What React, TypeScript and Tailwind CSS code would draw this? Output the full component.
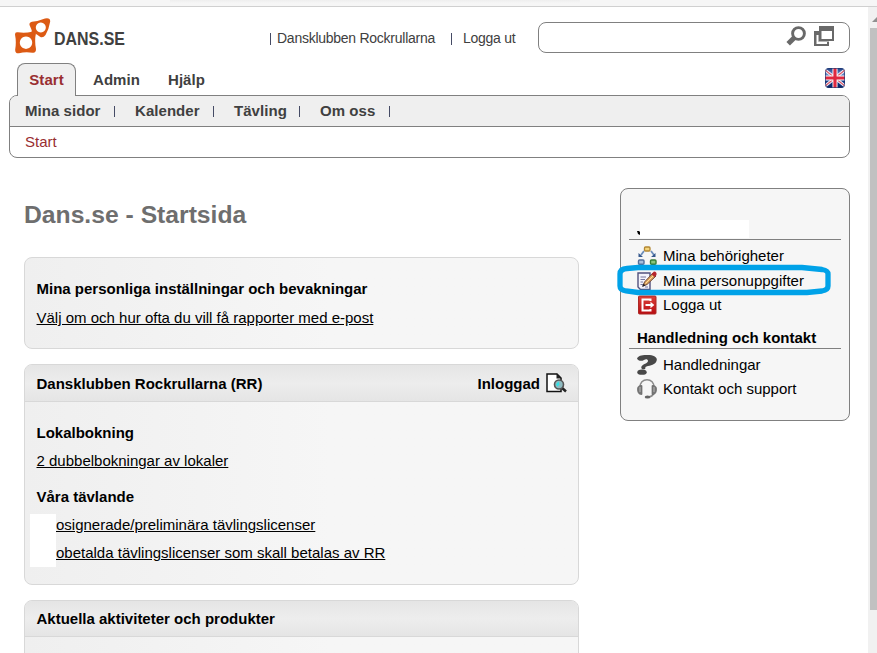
import type { ReactNode } from "react";

function Logo() {
  return (
    <svg width="37" height="37" viewBox="0 0 37 37" className="ml-[14px] mt-[10px] shrink-0">
      <g fill="#dc5a14" fillRule="evenodd">
        <path d="M1 17.500Q1 14.500 4 15.300Q11 16.300 18 14.800Q21.500 14 21.700 17Q20.500 25 22 32Q22 36.300 18.500 35.700Q11 34.700 5 36.200Q1 36.700 1.200 32.500Q2.500 25 1 17.500ZM12 19.500a6.200 6.200 0 1 0 .01 0Z" />
        <path d="M15.500 8Q15 5.500 18 4.800Q25 3.800 31 1.400Q36.300 .3 36.200 4.500Q35 12 31.500 18Q29 21.500 26 19.800Q23 17.500 19.500 15.500Q17.500 14 17 11.500ZM26.800 5.500a5 5 0 1 0 .01 0Z" />
        <path d="M18 13L22 15L21 19L17 17Z" />
      </g>
    </svg>
  );
}

function SearchIcon() {
  return (
    <svg width="20" height="20" viewBox="0 0 20 20">
      <circle cx="12.500" cy="7.500" r="5.900" fill="none" stroke="#696969" strokeWidth="2.900" />
      <path d="M8.500 11.500L2.200 17.800" stroke="#696969" strokeWidth="5" />
    </svg>
  );
}

function WindowsIcon() {
  return (
    <svg width="20" height="20" viewBox="0 0 20 20">
      <rect y="5" width="15" height="15" fill="#696969" />
      <path d="M2.500 9H5V15H13V18H2.500Z" fill="#fff" />
      <rect x="5" width="15" height="15" fill="#696969" />
      <rect x="7.500" y="5" width="10.500" height="8" fill="#fff" />
      <path d="M4.500 9V15.500H15" fill="none" stroke="#b5b5b5" />
    </svg>
  );
}

function FlagIcon() {
  return (
    <svg width="20" height="20" viewBox="0 0 20 20">
      <defs>
        <clipPath id="flag"><rect width="20" height="20" rx="4" /></clipPath>
        <linearGradient id="blue" x2="0" y2="1"><stop stopColor="#183b80" /><stop offset=".3" stopColor="#6788c8" /><stop offset=".6" stopColor="#173f92" /><stop offset="1" stopColor="#06205f" /></linearGradient>
      </defs>
      <g clipPath="url(#flag)">
        <rect width="20" height="20" fill="url(#blue)" />
        <path d="M0 2L20 18M20 2L0 18" stroke="#e9ebf5" strokeWidth="3.200" />
        <path d="M0 2L20 18M20 2L0 18" stroke="#df5968" strokeWidth="1.100" />
        <path d="M10 0V20M0 10H20" stroke="#fff" strokeWidth="5" />
        <path d="M10 0V20M0 10H20" stroke="#df2940" strokeWidth="3.200" />
      </g>
      <rect x=".5" y=".5" width="19" height="19" rx="3.500" fill="none" stroke="#20356f" strokeOpacity=".65" />
    </svg>
  );
}

function RolesIcon() {
  return (
    <svg width="20" height="20" viewBox="0 0 20 20">
      <path d="M7 5L4 9M14 5L17 9" stroke="#6c8dbb" strokeWidth="1.800" />
      <path d="M1.500 7V11H6ZM18.500 7V11H14Z" fill="#36598d" />
      <rect x="7.500" y="1" width="5.500" height="4" rx="1" fill="#f4d57c" stroke="#b28632" strokeWidth="1.300" />
      <rect x="1.500" y="14" width="5.500" height="4.300" rx="1" fill="#a8bedc" stroke="#526e9b" strokeWidth="1.400" />
      <rect x="13.500" y="14" width="5.500" height="4.300" rx="1" fill="#88c47d" stroke="#377d35" strokeWidth="1.400" />
    </svg>
  );
}

function EditIcon() {
  return (
    <svg width="20" height="20" viewBox="0 0 20 20">
      <path d="M1 2H13V18.500H3.500L1 16Z" fill="#f4f3fb" stroke="#52517d" strokeWidth="1.400" />
      <path d="M3.500 6H9M3.500 8.500H8M3.500 11H6M3.500 13.500H6M8 16H11" stroke="#77769d" />
      <path d="M6 15L7.500 11L16 2L19 5L10 13.500Z" fill="#dda35d" stroke="#6f4838" />
      <path d="M14.500 3L17 .5Q20 .5 19.500 4L17.500 6Z" fill="#b6252d" />
      <path d="M8.500 12.500L16 5" stroke="#ffdf9c" />
      <path d="M5 16L6.500 12.500L8.500 14.500Z" fill="#252229" />
    </svg>
  );
}

function LogoutIcon() {
  return (
    <svg width="20" height="20" viewBox="0 0 20 20">
      <defs><linearGradient id="red" x2="0" y2="1"><stop stopColor="#dc4239" /><stop offset="1" stopColor="#b80c11" /></linearGradient></defs>
      <rect x="1.500" y="1" width="17.500" height="18" rx="1" fill="url(#red)" stroke="#ad2825" />
      <path d="M13.500 6V4.500H5.500V15.500H13.500V14" fill="none" stroke="#fff" strokeWidth="2" />
      <path d="M8.500 9H13.500V6.800L17.300 10L13.500 13.200V11H8.500Z" fill="#fff" />
    </svg>
  );
}

function QuestionIcon() {
  return (
    <svg width="20" height="20" viewBox="0 0 20 20" fill="#484848">
      <path d="M0 3.500C2 0 6 0 11 0C17 0 21 2.500 19.500 6C18.500 9.500 13.500 10.500 9.500 11.500C7.500 12 9 13 8 14C6 15 3.500 13.500 4.500 11.500C5.500 9 11 8.500 11 6C11 4 8.500 4 7 5C4.500 6.500 1 6 0 3.500Z" />
      <ellipse cx="5" cy="17.200" rx="4.700" ry="2.600" />
    </svg>
  );
}

function HeadsetIcon() {
  return (
    <svg width="20" height="20" viewBox="0 0 20 20">
      <path d="M3 9C2-2 18-2 17 9M17 13Q16 18 11 18" fill="none" stroke="#8b8b8b" strokeWidth="1.500" />
      <path d="M5 6.500Q0 6 .5 11Q1 16 5 15.500ZM15 6.500Q20 6 19.500 11Q19 16 15 15.500Z" fill="#777" stroke="#686868" strokeWidth=".7" />
      <path d="M3 8V13M17 8V13" stroke="#b8b8b8" />
      <ellipse cx="10.500" cy="18" rx="2.800" ry="1.500" fill="#656565" />
    </svg>
  );
}

function InspectIcon() {
  return (
    <svg width="21" height="20" viewBox="0 0 21 20">
      <path d="M1 1H11L15 5V18.500H1Z" fill="#fff" stroke="#111" strokeWidth="1.500" />
      <path d="M10.500 .5V5.500H15.500Z" fill="#222" />
      <path d="M15 14L20 18.500" stroke="#222" strokeWidth="2.500" />
      <circle cx="13" cy="11.500" r="4.500" fill="#8fbac0" stroke="#555" strokeWidth="1.600" />
      <path d="M10 11.500L12.500 8.500L13.500 11.500L11.500 13.500Z" fill="#30e3e8" />
    </svg>
  );
}

function SideRow({ icon, children }: { icon: ReactNode; children: ReactNode }) {
  return (
    <div className="flex h-6 items-center">
      <span className="w-[26px] shrink-0">{icon}</span>
      <span>{children}</span>
    </div>
  );
}

function MenuItem({ label, width }: { label: string; width: string }) {
  return (
    <div className={`flex shrink-0 items-center justify-between ${width}`}>
      <span>{label}</span>
      <span className="h-[11px] w-px bg-[#454b65]" />
    </div>
  );
}

const cardBody = "bg-linear-to-r from-[#efefef] to-[#f6f6f6] to-55%";
const cardHead = "flex shrink-0 items-center border-b border-[#d8d8d8] bg-linear-to-b from-[#e5e5e5] via-[#ededed] to-[#e5e5e5] pl-3 pr-[11px] font-bold";

export default function App() {
  return (
    <div className="flex h-[653px] w-[877px] flex-col overflow-hidden whitespace-nowrap bg-white font-['Liberation_Sans',Arial,sans-serif] text-[15px] leading-[18px] text-black">
      <div className="h-[7px] shrink-0 border-b border-[#d0d0d0] bg-[#f6f6f6]">
        <div className="ml-[170px] h-[3px] w-[410px] bg-linear-to-b from-[#eeeeee] to-[#f6f6f6]" />
      </div>
      <div className="flex min-h-0 grow">
        <main className="flex w-[868px] shrink-0 flex-col">
          <header className="flex h-14 shrink-0 items-start text-[14px] text-[#404040]">
            <Logo />
            <div className="ml-[3px] mt-5 w-[70px]">
              <span className="inline-block origin-left scale-x-[0.84] text-[19px] font-bold leading-[23px]">DANS.SE</span>
            </div>
            <span className="ml-[146px] mt-[26px] h-3 w-px bg-[#454b65]" />
            <span className="ml-[6px] mt-[22px] w-[174px] tracking-[-0.26px]">Dansklubben Rockrullarna</span>
            <span className="mt-[26px] h-3 w-px bg-[#454b65]" />
            <span className="ml-[11px] mt-[22px] w-[75px] tracking-[-0.26px]">Logga ut</span>
            <div className="flex h-[31px] w-[312px] mt-[15px] justify-end gap-2 rounded-lg border border-[#808080] pr-[15px] pt-[3px]">
              <SearchIcon />
              <WindowsIcon />
            </div>
          </header>

          <nav className="flex h-8 shrink-0 items-start pl-[17px] font-bold tracking-[0.05px] text-[#404040]">
            <div className="z-10 flex h-[33px] w-[59px] items-center justify-center rounded-t-lg border border-b-0 border-[#808080] bg-[#efefef] text-[#992e31]">Start</div>
            <span className="ml-[17px] mt-2 w-[75px]">Admin</span>
            <span className="mt-2">Hjälp</span>
            <span className="ml-auto mr-[23px] mt-[5px]"><FlagIcon /></span>
          </nav>

          <div className="ml-[9px] h-[63px] w-[841px] shrink-0 overflow-hidden rounded-lg border border-[#808080]">
            <div className="flex h-[31px] items-center border-b border-[#808080] bg-[#efefef] pl-[15px] font-bold tracking-[0.05px] text-[#404040]">
              <MenuItem label="Mina sidor" width="w-[90px] mr-5" />
              <MenuItem label="Kalender" width="w-[79px] mr-5" />
              <MenuItem label="Tävling" width="w-[66px] mr-5" />
              <MenuItem label="Om oss" width="w-[70px]" />
            </div>
            <div className="flex h-[30px] items-center pl-[15px] text-[#992e31]">Start</div>
          </div>

          <div className="flex min-h-0 grow items-start pl-6">
            <section className="w-[555px] shrink-0">
              <h1 className="mt-[43px] h-14 text-[24.7px] font-bold leading-7 text-[#6e6e6e]">Dans.se - Startsida</h1>
              <div className={`h-[92px] rounded-lg border border-[#d8d8d8] pl-[11.5px] pt-[22px] ${cardBody}`}>
                <h2 className="font-bold">Mina personliga inställningar och bevakningar</h2>
                <a className="mt-[11px] block underline underline-offset-1">Välj om och hur ofta du vill få rapporter med e-post</a>
              </div>

              <div className={`mt-[15px] h-[221px] overflow-hidden rounded-lg border border-[#d8d8d8] ${cardBody}`}>
                <div className={`${cardHead} h-[37px]`}>
                  <span className="-ml-[0.5px] pt-[2px]">Dansklubben Rockrullarna (RR)</span>
                  <span className="ml-auto mr-[6px] pt-[2px]">Inloggad</span>
                  <InspectIcon />
                </div>
                <h2 className="ml-[11.5px] mt-[22px] font-bold">Lokalbokning</h2>
                <a className="ml-[11.5px] mt-[10px] block underline underline-offset-1">2 dubbelbokningar av lokaler</a>
                <h2 className="ml-[11.5px] mt-[18px] font-bold">Våra tävlande</h2>
                <div className="ml-[5px] mt-[8px] flex h-[53px]">
                  <span className="w-[26px] bg-white" />
                  <div className="flex flex-col pt-[2px]">
                    <a className="underline underline-offset-1">osignerade/preliminära tävlingslicenser</a>
                    <a className="mt-[10px] underline underline-offset-1">obetalda tävlingslicenser som skall betalas av RR</a>
                  </div>
                </div>
              </div>

              <div className={`mt-[15px] h-[120px] overflow-hidden rounded-lg border border-[#d8d8d8] ${cardBody}`}>
                <div className={`${cardHead} h-[36px]`}><span className="-ml-[0.5px] pt-px">Aktuella aktiviteter och produkter</span></div>
              </div>
            </section>

            <aside className="ml-[41px] mt-[30px] h-[233px] w-[230px] shrink-0 rounded-lg border border-[#808080] bg-[#f6f6f6] px-2">
              <div className="relative mt-[31px] h-5 border-b border-[#808080]">
                <div className="ml-[11px] h-[18px] w-[109px] bg-white" />
                <svg className="absolute left-2 top-[10px]" width="3" height="6" viewBox="0 0 3 6"><path d="M0 1H2L3 2V5L1 4Z" fill="#000" /></svg>
              </div>
              <div className="relative pl-2 pt-1">
                <SideRow icon={<RolesIcon />}>Mina behörigheter</SideRow>
                <div className="mt-px"><SideRow icon={<EditIcon />}>Mina personuppgifter</SideRow></div>
                <SideRow icon={<LogoutIcon />}>Logga ut</SideRow>
                <svg className="absolute -left-[13px] top-[24px]" width="216" height="34" viewBox="0 0 216 34">
                  <path d="M22 3.500H186L206 5.500Q212 6.500 212 10V22Q212 26 206 27L191 28.500H22L10 27Q4 26 4 22V10Q4 5 11 4.500Z" fill="none" stroke="#00a2e8" strokeWidth="5.300" />
                </svg>
              </div>
              <h2 className="mt-[12px] h-[20px] border-b border-[#808080] pl-2 font-bold">Handledning och kontakt</h2>
              <div className="pl-2 pt-1">
                <SideRow icon={<QuestionIcon />}>Handledningar</SideRow>
                <SideRow icon={<HeadsetIcon />}>Kontakt och support</SideRow>
              </div>
            </aside>
          </div>
        </main>
        <div className="h-full w-[9px] overflow-hidden bg-[#f1f1f1]">
          <div className="flex h-[21px] items-center pl-[4px] pt-1">
            <svg className="shrink-0" width="10" height="5" viewBox="0 0 10 5"><path d="M0 5L5 0L10 5Z" fill="#909090" /></svg>
          </div>
          <div className="ml-[2px] h-[582px] w-[7px] bg-[#c1c1c1]" />
        </div>
      </div>
    </div>
  );
}
